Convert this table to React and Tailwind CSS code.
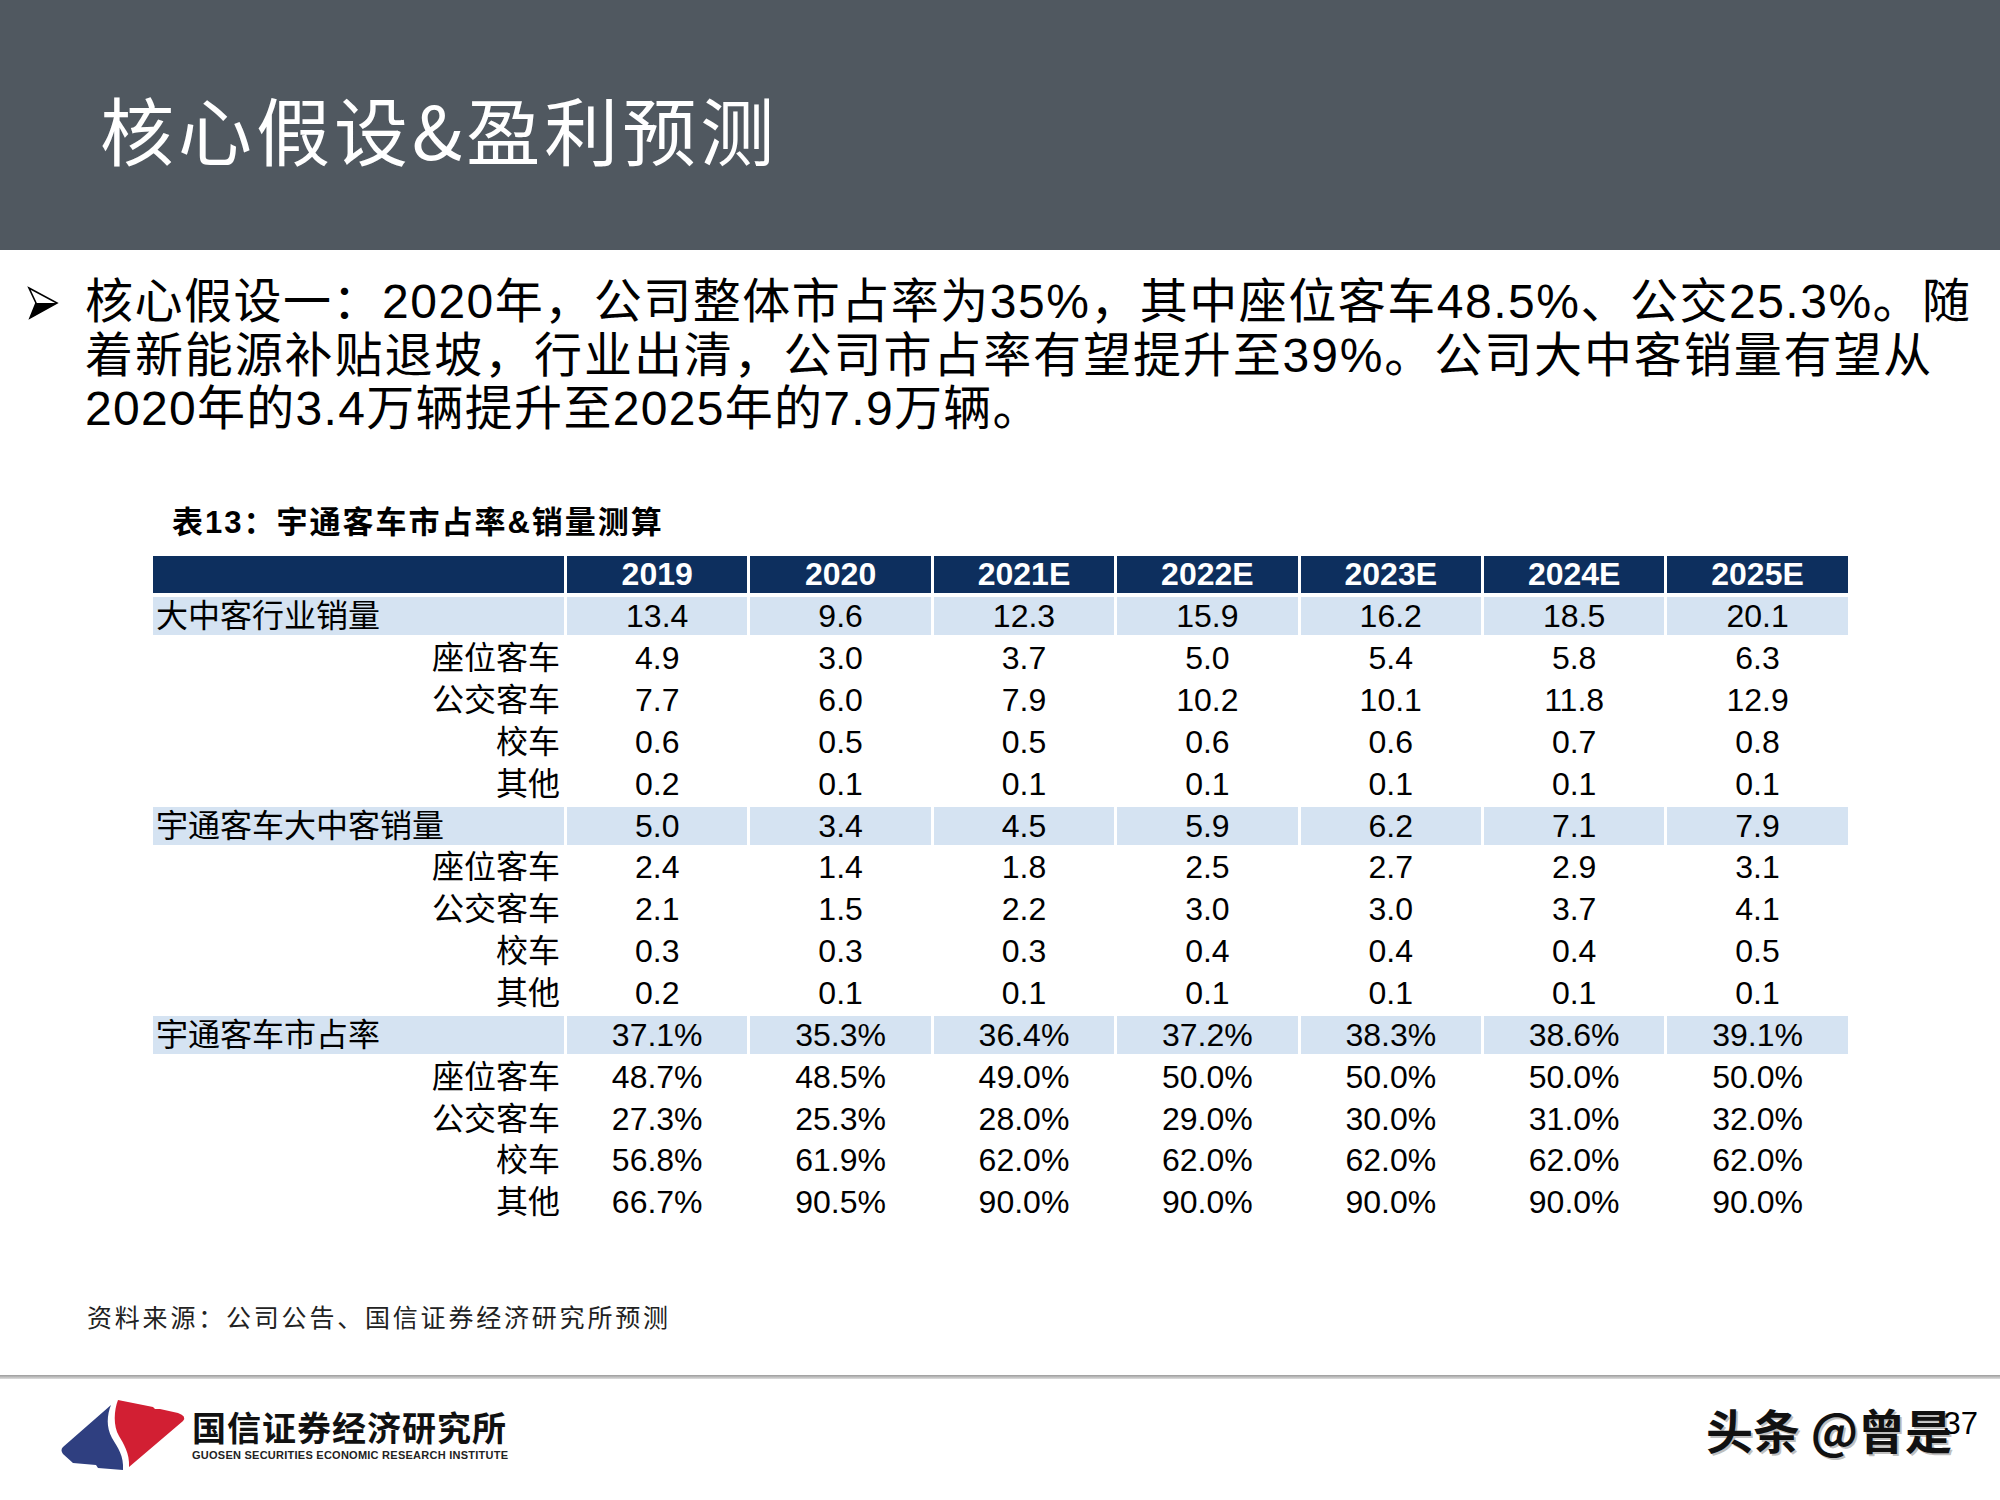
import React from "react";

const years = ["2019", "2020", "2021E", "2022E", "2023E", "2024E", "2025E"];

const rows = [
  { label: "大中客行业销量", hl: true, v: ["13.4", "9.6", "12.3", "15.9", "16.2", "18.5", "20.1"] },
  { label: "座位客车", v: ["4.9", "3.0", "3.7", "5.0", "5.4", "5.8", "6.3"] },
  { label: "公交客车", v: ["7.7", "6.0", "7.9", "10.2", "10.1", "11.8", "12.9"] },
  { label: "校车", v: ["0.6", "0.5", "0.5", "0.6", "0.6", "0.7", "0.8"] },
  { label: "其他", v: ["0.2", "0.1", "0.1", "0.1", "0.1", "0.1", "0.1"] },
  { label: "宇通客车大中客销量", hl: true, v: ["5.0", "3.4", "4.5", "5.9", "6.2", "7.1", "7.9"] },
  { label: "座位客车", v: ["2.4", "1.4", "1.8", "2.5", "2.7", "2.9", "3.1"] },
  { label: "公交客车", v: ["2.1", "1.5", "2.2", "3.0", "3.0", "3.7", "4.1"] },
  { label: "校车", v: ["0.3", "0.3", "0.3", "0.4", "0.4", "0.4", "0.5"] },
  { label: "其他", v: ["0.2", "0.1", "0.1", "0.1", "0.1", "0.1", "0.1"] },
  { label: "宇通客车市占率", hl: true, v: ["37.1%", "35.3%", "36.4%", "37.2%", "38.3%", "38.6%", "39.1%"] },
  { label: "座位客车", v: ["48.7%", "48.5%", "49.0%", "50.0%", "50.0%", "50.0%", "50.0%"] },
  { label: "公交客车", v: ["27.3%", "25.3%", "28.0%", "29.0%", "30.0%", "31.0%", "32.0%"] },
  { label: "校车", v: ["56.8%", "61.9%", "62.0%", "62.0%", "62.0%", "62.0%", "62.0%"] },
  { label: "其他", v: ["66.7%", "90.5%", "90.0%", "90.0%", "90.0%", "90.0%", "90.0%"] },
];

function Arrow() {
  return (
    <svg width="32" height="34" viewBox="0 0 32 34" className="shrink-0">
      <path d="M2 2 L30 17 L3 32 L9 17 Z" fill="#fff" stroke="#000" strokeWidth="1.6" strokeLinejoin="miter" />
      <path d="M9 17 L30 17 L3 32 Z" fill="#000" />
    </svg>
  );
}

function Logo() {
  return (
    <svg width="130" height="76" viewBox="0 0 130 76">
      <path
        d="M58 3 L93 10 L95 12 L100 12 L118 16 Q127 19 123 24 L69 70 C70 56 63 46 59 39 C53 29 54 13 58 3 Z"
        fill="#d21f33"
      />
      <path
        d="M51 8 C47 18 46 30 52 41 C58 51 64 59 63 73 L38 71 L36 68 L13 66 L3 57 Q0 53 3 50 Z"
        fill="#2f3f80"
      />
    </svg>
  );
}

export default function App() {
  const sans = "font-['Liberation_Sans','Noto_Sans_CJK_SC',sans-serif]";
  return (
    <div className={`w-[2000px] h-[1500px] bg-white overflow-hidden text-black ${sans}`}>
      <header className="h-[250px] bg-[#505860] flex items-center pl-[100px] pt-[6px]">
        <h1 className="text-[74px] leading-none text-white tracking-[4px] font-['Noto_Sans_CJK_SC',sans-serif] font-normal">
          核心假设&amp;盈利预测
        </h1>
      </header>

      <section className="flex pl-[27px] pt-[25px]">
        <div className="pt-[11px] w-[58px]">
          <Arrow />
        </div>
        <div className="text-[48px] leading-[53.5px]">
          <div className="tracking-[1.5px] whitespace-nowrap">
            核心假设一：2020年，公司整体市占率为35%，其中座位客车48.5%、公交25.3%。随
          </div>
          <div className="tracking-[1.9px] whitespace-nowrap">
            着新能源补贴退坡，行业出清，公司市占率有望提升至39%。公司大中客销量有望从
          </div>
          <div className="tracking-[1.3px] whitespace-nowrap">2020年的3.4万辆提升至2025年的7.9万辆。</div>
        </div>
      </section>

      <div className="pl-[172px] mt-[67px] text-[31px] leading-[40px] font-bold tracking-[2px]">
        表13：宇通客车市占率&amp;销量测算
      </div>

      <div className="ml-[151.5px] mt-[11px] w-[1698px]">
        <div className="grid grid-cols-[414px_repeat(7,183.4px)] h-[41.86px]">
          <div className="px-[1.5px] py-[2px]">
            <div className="h-full bg-[#0d2f5e]" />
          </div>
          {years.map((y) => (
            <div key={y} className="px-[1.5px] py-[2px]">
              <div className="h-full bg-[#0d2f5e] text-white font-bold text-[32px] leading-none flex items-center justify-center">
                {y}
              </div>
            </div>
          ))}
        </div>
        {rows.map((r, i) => (
          <div key={i} className="grid grid-cols-[414px_repeat(7,183.4px)] h-[41.86px]">
            <div className="px-[1.5px] py-[2px]">
              <div
                className={
                  r.hl
                    ? "h-full bg-[#d5e3f2] flex items-center pl-[3px] text-[32px] leading-none"
                    : "h-full flex items-center justify-end pr-[4px] text-[32px] leading-none"
                }
              >
                {r.label}
              </div>
            </div>
            {r.v.map((v, j) => (
              <div key={j} className="px-[1.5px] py-[2px]">
                <div
                  className={
                    r.hl
                      ? "h-full bg-[#d5e3f2] flex items-center justify-center text-[32px] leading-none"
                      : "h-full flex items-center justify-center text-[32px] leading-none"
                  }
                >
                  {v}
                </div>
              </div>
            ))}
          </div>
        ))}
      </div>

      <div className="pl-[87px] mt-[80px] text-[25px] leading-[30px] tracking-[2.8px] text-[#222]">
        资料来源：公司公告、国信证券经济研究所预测
      </div>

      <div className="mt-[42px] h-[4px] bg-gradient-to-b from-[#9c9c9c] to-[#dedede]" />

      <footer className="flex items-start justify-between pl-[60px] pr-[22px] pt-[18px]">
        <div className="flex items-start">
          <Logo />
          <div className="ml-[2px] pt-[12px]">
            <div className="text-[34px] leading-[36px] font-bold tracking-[1px] text-[#111] font-['Noto_Sans_CJK_SC',sans-serif]">
              国信证券经济研究所
            </div>
            <div className="mt-[4px] text-[11px] leading-[12px] font-bold tracking-[0.25px] text-[#222] whitespace-nowrap">
              GUOSEN SECURITIES ECONOMIC RESEARCH INSTITUTE
            </div>
          </div>
        </div>
        <div className="relative flex items-start pt-[11px]">
          <div className="absolute right-[26px] top-[6px] whitespace-nowrap text-[47px] leading-[52px] font-bold text-[#111] [text-shadow:2px_2px_0_rgba(0,0,0,0.25)] font-['Noto_Sans_CJK_SC',sans-serif]">
            头条 @曾是
          </div>
          <span className="text-[31px] leading-[32px]">37</span>
        </div>
      </footer>
    </div>
  );
}
